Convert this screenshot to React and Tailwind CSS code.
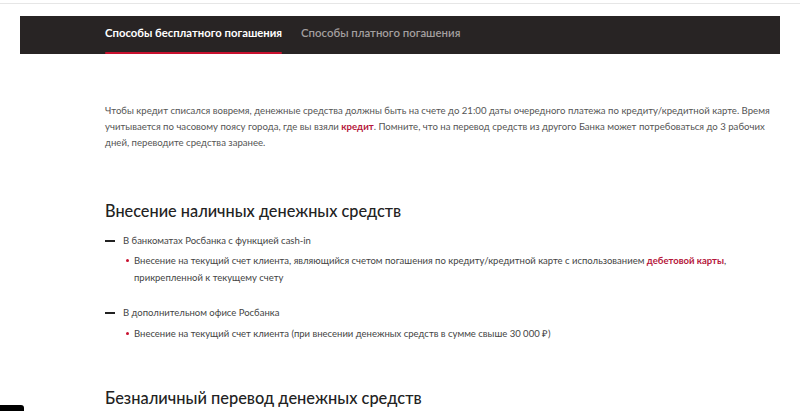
import React from "react";

const font = { fontFamily: "Lato, 'Open Sans', sans-serif" };

const Dash = ({ children }) => (
  <div className="flex items-center gap-[8px] text-[9.5px] text-[#444] leading-[14px]">
    <span className="block w-[10px] h-[1.5px] bg-[#222]" />
    <span>{children}</span>
  </div>
);

const Bullet = ({ children }) => (
  <div className="flex gap-[5px] pl-[21px] text-[9.5px] text-[#444] leading-[17px]">
    <span className="mt-[7px] block w-[3px] h-[3px] rounded-full bg-[#c8102e] shrink-0" />
    <span>{children}</span>
  </div>
);

export default function App() {
  return (
    <div className="relative w-[800px] h-[411px] overflow-hidden bg-white" style={font}>
      <div className="h-[4px] border-b border-[#e6e6e6]" />
      <div className="mx-[20px] mt-[12px] h-[38px] bg-[#282424] flex pl-[85px] gap-[19px] pb-[4px]">
        <div className="relative flex items-center text-[11.3px] font-bold text-white">
          Способы бесплатного погашения
          <span className="absolute left-0 right-0 bottom-[-4px] h-[2.5px] bg-[#c8102e] rounded-full" />
        </div>
        <div className="flex items-center text-[11.4px] font-semibold text-[#a39f9f]">
          Способы платного погашения
        </div>
      </div>

      <div className="pl-[105px] pr-[20px]">
        <p className="mt-[49px] text-[9.6px] leading-[16px] text-[#555] whitespace-nowrap">
          Чтобы кредит списался вовремя, денежные средства должны быть на счете до 21:00 даты очередного платежа по кредиту/кредитной карте. Время
          <br />
          учитывается по часовому поясу города, где вы взяли{" "}
          <span className="font-bold text-[#b5173b]">кредит</span>. Помните, что на перевод средств из другого Банка может потребоваться до 3 рабочих
          <br />
          дней, переводите средства заранее.
        </p>

        <h2 className="mt-[49px] text-[16.3px] leading-[22px] text-[#222] font-medium">
          Внесение наличных денежных средств
        </h2>

        <div className="mt-[12px]">
          <Dash>В банкоматах Росбанка с функцией cash-in</Dash>
          <div className="mt-[3.5px]">
            <Bullet>
              <span className="whitespace-nowrap">
                Внесение на текущий счет клиента, являющийся счетом погашения по кредиту/кредитной карте с использованием{" "}
                <span className="font-bold text-[#b5173b]">дебетовой карты</span>,
              </span>
              <br />
              прикрепленной к текущему счету
            </Bullet>
          </div>
        </div>

        <div className="mt-[20.5px]">
          <Dash>В дополнительном офисе Росбанка</Dash>
          <div className="mt-[4.5px]">
            <Bullet>
              Внесение на текущий счет клиента (при внесении денежных средств в сумме свыше 30 000 ₽)
            </Bullet>
          </div>
        </div>

        <h2 className="mt-[45.5px] text-[16.4px] leading-[22px] text-[#222] font-medium">
          Безналичный перевод денежных средств
        </h2>
      </div>

      <div className="absolute left-0 bottom-0 w-[24px] h-[6px] bg-black rounded-tr-[3px]" />
    </div>
  );
}
